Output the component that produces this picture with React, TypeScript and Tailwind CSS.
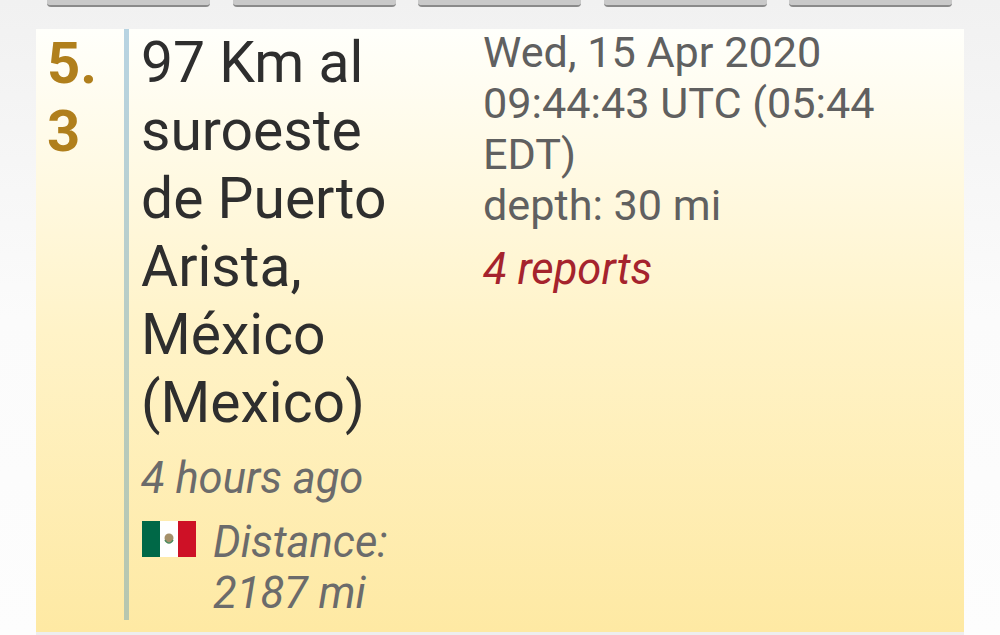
export default function App() {
  const buttons = [0, 1, 2, 3, 4];
  return (
    <div className="flex h-[635px] w-[1000px] flex-col overflow-hidden bg-gradient-to-b from-[#f1f1f1] via-[#fbfbfb] to-[#fdfdfd] font-['Roboto',sans-serif]">
      <div className="flex h-[29px] shrink-0 items-start gap-[22.5px] pl-[47px]">
        {buttons.map((b) => (
          <div key={b} className="h-[7px] w-[163px] rounded-b-[4px] border-b-2 border-[#8a8a8a] bg-[#c9c9c9]" />
        ))}
      </div>
      <div className="mx-[36px] flex h-[603px] w-[928px] shrink-0 bg-gradient-to-b from-[#fffffb] via-[#fff3c8] to-[#fee9a3] pl-[11px]">
        <div className="w-[77px] text-[58px] leading-[68px] font-bold break-all text-[#b07f1c]">
          <div className="w-[56px]">5.3</div>
        </div>
        <div className="mb-[12px] w-[359px] border-l-[5px] border-[#4e94bf]/40 pl-[13px]">
          <div className="-ml-[1px] text-[57px] leading-[68px] text-[#2e2e2e]">
            97 Km al
            <br />
            suroeste
            <br />
            de Puerto
            <br />
            Arista,
            <br />
            México
            <br />
            (Mexico)
          </div>
          <div className="mt-[16px] -ml-[1px] text-[43.5px] leading-[51px] text-[#6b6b6b] italic">4 hours ago</div>
          <div className="mt-[13px] flex items-start gap-[17px]">
            <svg width="54" height="36" viewBox="0 0 54 36" className="mt-[4px] shrink-0">
              <rect width="18" height="36" fill="#006847" />
              <rect x="18" width="18" height="36" fill="#ffffff" />
              <rect x="36" width="18" height="36" fill="#ce1126" />
              <circle cx="27" cy="17" r="4.5" fill="#a5906a" />
              <path d="M23 19c2 4 6 4 8 0" fill="none" stroke="#4d8a5e" strokeWidth="1.5" />
            </svg>
            <div className="text-[43.5px] leading-[51px] text-[#6b6b6b] italic">
              Distance:
              <br />
              2187 mi
            </div>
          </div>
        </div>
        <div className="flex-1 -mt-[2px]">
          <div className="text-[43.2px] leading-[51px] text-[#606060]">
            Wed, 15 Apr 2020
            <br />
            09:44:43 UTC (05:44
            <br />
            EDT)
            <br />
            depth: 30 mi
          </div>
          <div className="mt-[13px] text-[43.5px] leading-[51px] text-[#a5232d] italic">4 reports</div>
        </div>
      </div>
      <div className="mx-[36px] flex-1 bg-[#eeeeee]" />
    </div>
  );
}
